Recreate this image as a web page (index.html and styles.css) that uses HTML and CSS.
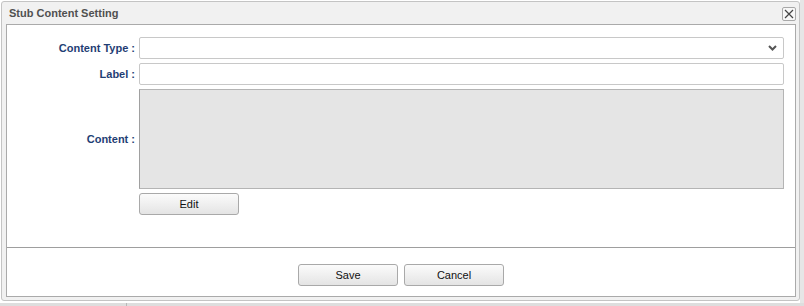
FILE: index.html
```html
<!DOCTYPE html>
<html>
<head>
<meta charset="utf-8">
<link rel="stylesheet" href="styles.css">
</head>
<body>
<div class="page">
  <div class="page-top"></div>
  <div class="dialog">
    <div class="titlebar">
      <span class="title">Stub Content Setting</span>
      <button class="close" title="Close">
        <svg width="10" height="10" viewBox="0 0 10 10"><path d="M1 1L9 9M9 1L1 9" stroke="#444" stroke-width="1.2" fill="none"/></svg>
      </button>
    </div>
    <div class="panel">
      <div class="form">
        <label class="lbl">Content Type :</label>
        <div class="select">
          <svg class="chev" width="9" height="6" viewBox="0 0 9 6"><path d="M1 1L4.5 4.5L8 1" stroke="#555" stroke-width="2" fill="none"/></svg>
        </div>
        <label class="lbl">Label :</label>
        <div class="input"></div>
        <label class="lbl">Content :</label>
        <div class="area"></div>
        <span></span>
        <div><button class="btn">Edit</button></div>
      </div>
      <div class="actions">
        <button class="btn">Save</button>
        <button class="btn">Cancel</button>
      </div>
    </div>
  </div>
  <div class="page-bottom"><span class="cell"></span></div>
</div>
</body>
</html>
```
FILE: styles.css
```css
html, body {
  margin: 0;
  padding: 0;
}
body {
  background: #ffffff;
  font-family: "Liberation Sans", Arial, sans-serif;
  font-size: 11px;
  width: 804px;
  height: 306px;
  overflow: hidden;
}
.page {
  display: flex;
  flex-direction: column;
  background: linear-gradient(to right, #ffffff 0, #ffffff 800px, #e6e6e6 800px);
  height: 306px;
}
.page-top {
  height: 1px;
}
.dialog {
  box-sizing: border-box;
  width: 799px;
  height: 300px;
  margin-left: 1px;
  border: 1px solid #c4c4c4;
  border-radius: 3px;
  background: #f1f1f1;
  display: flex;
  flex-direction: column;
  padding: 0 3px 3px 4px;
}
.titlebar {
  height: 22px;
  display: flex;
  align-items: center;
  justify-content: space-between;
}
.title {
  font-weight: bold;
  font-size: 11px;
  color: #505050;
  padding-left: 3px;
  line-height: 22px;
}
.close {
  box-sizing: border-box;
  width: 14px;
  height: 14px;
  padding: 0;
  margin: 1px 0 0 0;
  border: 1px solid #a8a8a8;
  border-radius: 2px;
  background: #f7f7f7;
  display: flex;
  align-items: center;
  justify-content: center;
}
.panel {
  flex: 1;
  background: #ffffff;
  border: 1px solid #aaaaaa;
  display: flex;
  flex-direction: column;
}
.form {
  box-sizing: border-box;
  display: grid;
  grid-template-columns: 132px 1fr;
  row-gap: 4px;
  padding: 12px 11px 0 0;
  height: 222px;
  align-items: center;
  align-content: start;
}
.lbl {
  text-align: right;
  padding-right: 4px;
  font-weight: bold;
  font-size: 11px;
  color: #1f3e74;
}
.select, .input {
  box-sizing: border-box;
  height: 22px;
  border: 1px solid #c8c8c8;
  border-radius: 2px;
  background: #ffffff;
  display: flex;
  align-items: center;
  justify-content: flex-end;
}
.chev {
  margin-right: 6px;
}
.area {
  box-sizing: border-box;
  height: 100px;
  border: 1px solid #b4b4b4;
  border-left-color: #a0a0a0;
  background: #e5e5e5;
}
.btn {
  box-sizing: border-box;
  width: 100px;
  height: 22px;
  padding: 0;
  border: 1px solid #a9a9a9;
  border-radius: 3px;
  background: linear-gradient(to bottom, #fbfbfb, #e4e4e4);
  font-family: "Liberation Sans", Arial, sans-serif;
  font-size: 11px;
  color: #111111;
}
.actions {
  border-top: 1px solid #9e9e9e;
  flex: 1;
  display: flex;
  justify-content: center;
  align-items: flex-start;
  gap: 6px;
  padding-top: 16px;
}
.page-bottom {
  margin-top: 2px;
  flex: 1;
  background: #dedede;
  display: flex;
}
.cell {
  width: 126px;
  border-right: 1px solid #b8b8b8;
}
```
